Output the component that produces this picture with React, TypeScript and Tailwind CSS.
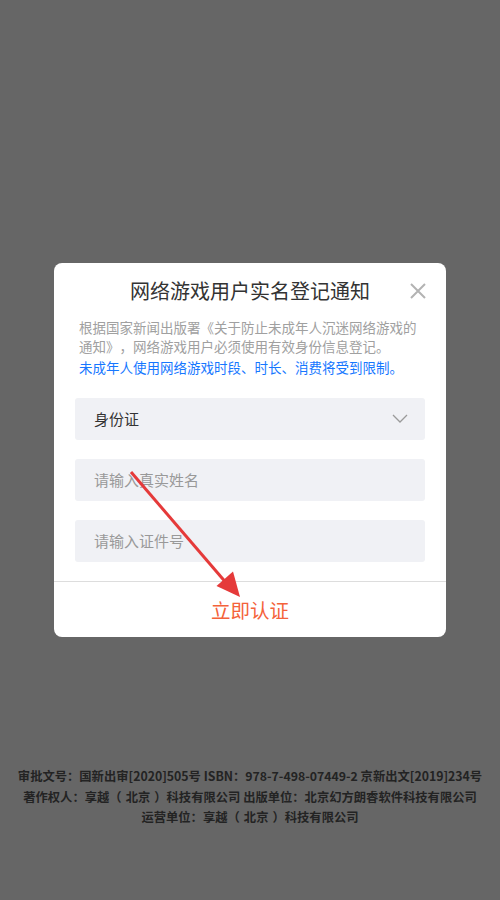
import React from 'react'

const cjk = '"Noto Sans CJK SC", "Noto Sans", sans-serif'

function CloseIcon() {
  return (
    <svg width="16" height="16" viewBox="0 0 16 16" fill="none">
      <path d="M1 1 L15 15 M15 1 L1 15" stroke="#b3b3b3" strokeWidth="2" />
    </svg>
  )
}

function Chevron() {
  return (
    <svg width="16" height="9" viewBox="0 0 16 9" fill="none">
      <path d="M1 1 L8 8 L15 1" stroke="#9a9a9a" strokeWidth="1.3" />
    </svg>
  )
}

function Field({ text, placeholder }: { text: string; placeholder?: boolean }) {
  return (
    <div
      className={
        'flex h-[42px] items-center rounded-[3px] bg-[#f0f1f5] pl-[19px] text-[15px] ' +
        (placeholder ? 'text-[#999999]' : 'text-[#333333]')
      }
    >
      {text}
    </div>
  )
}

// company name with the wide-set full-width brackets of the original
function Company() {
  return (
    <>
      享越<span className="mr-[4px]">（</span>北京<span className="ml-[4px]">）</span>科技有限公司
    </>
  )
}

export default function App() {
  return (
    <div
      className="relative flex min-h-[900px] flex-col items-center bg-[#666666] [text-spacing-trim:space-all]"
      style={{ fontFamily: cjk }}
    >
      {/* dialog */}
      <div className="mt-[263px] w-[392px] overflow-hidden rounded-[8px] bg-white">
        <div className="relative flex h-[55px] items-center justify-center text-[20px] text-[#333333]">
          网络游戏用户实名登记通知
          <button className="absolute right-[20px] top-[20px]">
            <CloseIcon />
          </button>
        </div>
        <div className="px-[25px] text-[13.5px] leading-[19px]">
          <p className="text-[#a0a0a0]">
            根据国家新闻出版署《关于防止未成年人沉迷网络游戏的通知》，网络游戏用户必须使用有效身份信息登记。
          </p>
          <p className="mt-[2px] text-[#1677ff]">
            未成年人使用网络游戏时段、时长、消费将受到限制。
          </p>
        </div>
        <div className="mt-[21px] flex flex-col gap-[19px] px-[21px]">
          <div className="relative">
            <Field text="身份证" />
            <div className="absolute right-[17px] top-[16px]">
              <Chevron />
            </div>
          </div>
          <Field text="请输入真实姓名" placeholder />
          <Field text="请输入证件号" placeholder />
        </div>
        <div className="mt-[19px] flex h-[56px] items-center justify-center border-t border-[#dddddd] text-[19.5px] text-[#f4623a]">
          立即认证
        </div>
      </div>

      {/* footer */}
      <div className="mt-[129px] whitespace-nowrap text-center text-[12.3px] font-bold leading-[20.5px] text-[#232323]">
        <p>审批文号：国新出审[2020]505号 ISBN：978-7-498-07449-2 京新出文[2019]234号</p>
        <p>
          著作权人：<Company /> 出版单位：北京幻方朗睿软件科技有限公司
        </p>
        <p>
          运营单位：<Company />
        </p>
      </div>

      {/* annotation arrow */}
      <svg
        className="pointer-events-none absolute left-0 top-0"
        width="500"
        height="900"
        viewBox="0 0 500 900"
      >
        <line x1="131" y1="472" x2="228" y2="585" stroke="#e53a3a" strokeWidth="3" />
        <polygon points="216.5,586 233,571.5 240,597" fill="#e53a3a" />
      </svg>
    </div>
  )
}
